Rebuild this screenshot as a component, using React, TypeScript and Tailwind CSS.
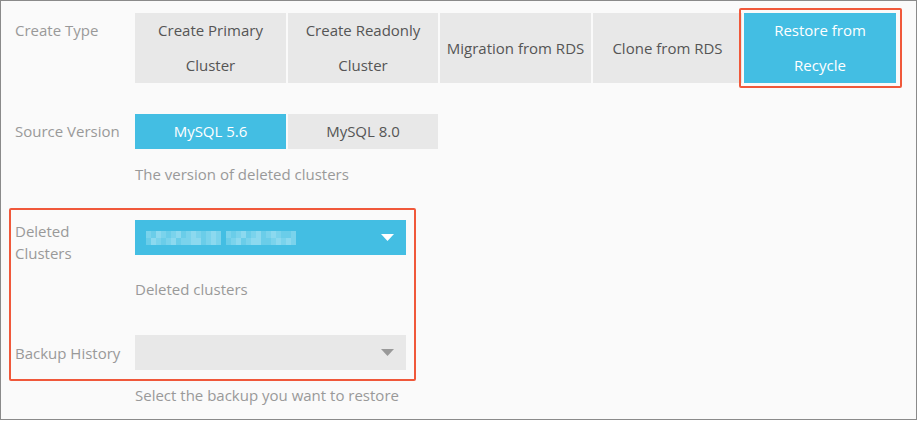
import React from "react";

const font = { fontFamily: '"Open Sans", "Noto Sans", sans-serif' };

// pixelated (mosaic) value in the deleted clusters select
const mosaicTop = [2, 1, 3, 2, 1, 2, 3, 1, 2, 3, 2, 1, 2, 3, 2, 0, 2, 1, 2, 3, 1, 2, 3, 1, 2, 3, 2, 1, 1, 2];
const mosaicBottom = [1, 3, 2, 1, 2, 3, 1, 2, 2, 3, 3, 1, 2, 3, 2, 0, 1, 2, 3, 1, 2, 3, 3, 1, 1, 2, 3, 2, 3, 2];
const shade = ["transparent", "bg-[#6acde9]", "bg-[#7ad3ec]", "bg-[#8cd9ef]"];

function Caret({ color }: { color: string }) {
    return (
        <svg width="13" height="7" viewBox="0 0 13 7">
            <path d="M0 0 L13 0 L6.5 7 Z" fill={color} />
        </svg>
    );
}

function Option({ label, active, w, tall }: { label: React.ReactNode; active?: boolean; w: string; tall?: boolean }) {
    return (
        <div
            className={`${w} ${tall ? "h-[70px]" : "h-[35px]"} flex items-center justify-center text-center text-[15px] leading-[35px] ${
                active ? "bg-[#43bee3] text-white" : "bg-[#e8e8e8] text-[#555]"
            }`}
        >
            <span>{label}</span>
        </div>
    );
}

export default function App() {
    return (
        <div className="w-[917px] h-[421px] overflow-hidden bg-white" style={font}>
            <div className="w-[917px] h-[420px] border border-[#8a8a8a] bg-[#fafafa] pl-[14px] pt-[12px]">
                {/* Create Type */}
                <div className="flex">
                    <div className="w-[120px] text-[15px] leading-[35px] text-[#999]">Create Type</div>
                    <div className="flex gap-[2px]">
                        <Option tall w="w-[151px]" label={<>Create Primary<br />Cluster</>} />
                        <Option tall w="w-[150px]" label={<>Create Readonly<br />Cluster</>} />
                        <Option tall w="w-[151px]" label="Migration from RDS" />
                        <Option tall w="w-[149px]" label="Clone from RDS" />
                        <div className="relative">
                            <Option tall active w="w-[152px]" label={<>Restore from<br />Recycle</>} />
                            <div className="absolute -top-[5px] -bottom-[5px] -left-[5px] -right-[6px] border-2 border-[#f0583a] rounded-[2px]" />
                        </div>
                    </div>
                </div>

                {/* Source Version */}
                <div className="flex mt-[31px]">
                    <div className="w-[120px] text-[15px] leading-[35px] text-[#999]">Source Version</div>
                    <div className="flex gap-[2px]">
                        <Option active w="w-[151px]" label="MySQL 5.6" />
                        <Option w="w-[150px]" label="MySQL 8.0" />
                    </div>
                </div>
                <div className="ml-[120px] mt-[15px] text-[15px] leading-[20px] text-[#999]">
                    The version of deleted clusters
                </div>

                {/* Highlighted section */}
                <div className="relative mt-[36px] w-[391px]">
                    <div className="absolute -top-[12px] -bottom-[11px] -left-[6px] -right-[10px] border-2 border-[#f0583a] rounded-[2px]" />

                    <div className="flex">
                        <div className="w-[120px] text-[15px] leading-[22px] text-[#999]">
                            Deleted
                            <br />
                            Clusters
                        </div>
                        <div className="w-[271px] h-[35px] bg-[#43bee3] flex items-center justify-between pl-[11px] pr-[12px]">
                            <div className="flex flex-col">
                                {[mosaicTop, mosaicBottom].map((row, r) => (
                                    <div key={r} className="flex">
                                        {row.map((s, i) => (
                                            <div key={i} className={`w-[5px] h-[7px] ${shade[s]}`} />
                                        ))}
                                    </div>
                                ))}
                            </div>
                            <Caret color="#ffffff" />
                        </div>
                    </div>
                    <div className="ml-[120px] mt-[15px] text-[15px] leading-[20px] text-[#999]">Deleted clusters</div>

                    <div className="flex items-center mt-[36px]">
                        <div className="w-[120px] text-[15px] leading-[22px] text-[#999]">Backup History</div>
                        <div className="w-[271px] h-[35px] bg-[#e8e8e8] flex items-center justify-end pr-[12px]">
                            <Caret color="#999999" />
                        </div>
                    </div>
                </div>
                <div className="ml-[120px] mt-[15px] text-[15px] leading-[20px] text-[#999]">
                    Select the backup you want to restore
                </div>
            </div>
        </div>
    );
}
